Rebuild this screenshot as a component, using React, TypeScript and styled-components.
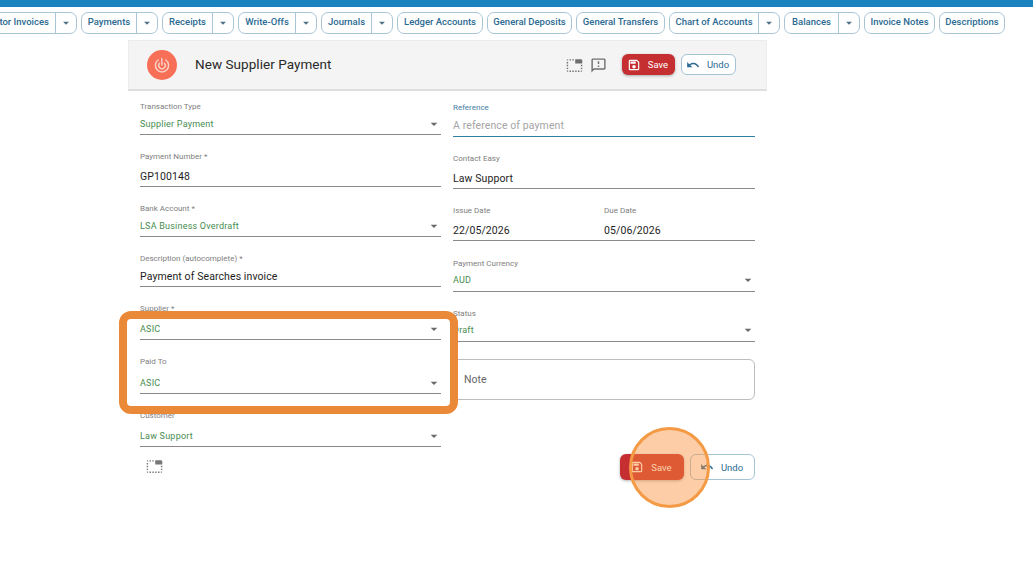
import React from "react";
import styled, { createGlobalStyle } from "styled-components";
import { MdArrowDropDown, MdOutlineSave, MdUndo, MdTabUnselected, MdOutlineFeedback } from "react-icons/md";

const Global = createGlobalStyle`
  html, body { margin: 0; padding: 0; background: #fff; }
  body { font-family: Roboto, "Liberation Sans", sans-serif; overflow: hidden; }
`;

const Page = styled.div`
  position: relative;
  width: 1033px;
  height: 576px;
  overflow: hidden;
`;
const TopBar = styled.div`
  height: 7px;
  background: #1a82bf;
`;
const Nav = styled.nav`
  display: flex;
  gap: 4px;
  margin: 5px 0 0 -30px;
  height: 22px;
`;
const NavGroup = styled.div<{ $w: number }>`
  display: flex;
  flex: none;
  width: ${(p) => p.$w}px;
  height: 22px;
  box-sizing: border-box;
  border: 1px solid #a9c6d6;
  border-radius: 7px;
  color: #2b6a92;
  font: 500 9.5px/18px Roboto, sans-serif;
`;
const NavLabel = styled.span`
  flex: 1;
  text-align: center;
  white-space: nowrap;
`;
const NavCaret = styled.span`
  flex: none;
  width: 20px;
  border-left: 1px solid #a9c6d6;
  display: flex;
  align-items: center;
  justify-content: center;
  color: #4e7187;
  font-size: 14px;
`;
const Panel = styled.main`
  width: 639px;
  margin: 6px 0 0 128px;
`;
const Header = styled.header`
  height: 51px;
  box-sizing: border-box;
  background: #f4f4f4;
  border: 1px solid #ececec;
  border-bottom: 2px solid #dedede;
  display: flex;
  align-items: center;
  padding: 0 30px 0 18px;
`;
const Logo = styled.svg`
  width: 30px;
  height: 30px;
  flex: none;
`;
const Title = styled.h1`
  margin: 0 0 2px 18px;
  flex: 1;
  font: 400 13.5px Roboto, sans-serif;
  letter-spacing: 0.05px;
  color: #2a2a2a;
`;
const HeaderIcon = styled.span`
  display: flex;
  color: #6f6f6f;
  font-size: 17px;
  margin-right: 7px;
`;
const SolidButton = styled.button<{ $w: number; $h: number }>`
  width: ${(p) => p.$w}px;
  height: ${(p) => p.$h}px;
  border: 0;
  border-radius: 6px;
  background: #c62f31;
  box-shadow: 0 1px 3px rgba(0, 0, 0, 0.3);
  color: #fff;
  font: 400 9.5px Roboto, sans-serif;
  display: flex;
  align-items: center;
  justify-content: center;
  gap: 7px;
  padding: 0 2px 0 0;
  svg { font-size: 14px; }
`;
const OutlineButton = styled.button<{ $w: number; $h: number }>`
  width: ${(p) => p.$w}px;
  height: ${(p) => p.$h}px;
  box-sizing: border-box;
  border: 1px solid #a4c4d6;
  border-radius: 6px;
  background: #fff;
  color: #2b6a92;
  font: 400 9.5px Roboto, sans-serif;
  display: flex;
  align-items: center;
  justify-content: center;
  gap: 7px;
  padding: 0 2px 0 0;
  svg { font-size: 14px; }
`;
const HeaderActions = styled.div`
  display: flex;
  align-items: center;
  gap: 6px;
  margin: 0 0 1px 8px;
`;
const Form = styled.div`
  display: grid;
  grid-template-columns: 301px 302px;
  column-gap: 12px;
  padding: 0 12px;
`;
const Column = styled.div`
  display: flex;
  flex-direction: column;
`;
const FieldBox = styled.div<{ $h: number }>`
  height: ${(p) => p.$h}px;
  display: flex;
  flex-direction: column;
  justify-content: flex-end;
  min-width: 0;
`;
const Label = styled.label<{ $gap: number; $active?: boolean }>`
  font: 400 8px/10px Roboto, sans-serif;
  color: ${(p) => (p.$active ? "#3f7ea6" : "#808080")};
  margin-bottom: ${(p) => p.$gap}px;
`;
const Control = styled.div<{ $active?: boolean; $low?: boolean }>`
  display: flex;
  align-items: center;
  justify-content: space-between;
  box-sizing: border-box;
  height: 20px;
  padding-bottom: ${(p) => (p.$low ? 1 : 3)}px;
  border-bottom: 1px solid ${(p) => (p.$active ? "#2f7f9e" : "#8a8a8a")};
`;
const SelectValue = styled.span`
  font: 400 9px Roboto, sans-serif;
  letter-spacing: 0.22px;
  color: #478c4f;
`;
const InputValue = styled.span<{ $placeholder?: boolean }>`
  font: 400 10.5px Roboto, sans-serif;
  letter-spacing: 0.1px;
  color: ${(p) => (p.$placeholder ? "#a5a5a5" : "#1e1e1e")};
`;
const Caret = styled.span`
  display: flex;
  color: #6a6a6a;
  font-size: 16px;
  margin-right: -1px;
`;
const DateRow = styled.div`
  display: grid;
  grid-template-columns: 1fr 1fr;
  height: 52px;
  column-gap: 0;
`;
const Note = styled.div`
  margin-top: 17px;
  height: 41px;
  box-sizing: border-box;
  border: 1px solid #bdbdbd;
  border-radius: 6px;
  padding-left: 10px;
  display: flex;
  align-items: center;
  font: 400 10.5px Roboto, sans-serif;
  color: #666;
`;
const Footer = styled.div`
  display: flex;
  align-items: center;
  padding: 7px 12px 0 18px;
`;
const FooterIcon = styled.span`
  display: flex;
  flex: 1;
  color: #777;
  font-size: 17px;
  margin-top: -1px;
`;
const FooterActions = styled.div`
  display: flex;
  gap: 6px;
`;
const Highlight = styled.div`
  position: absolute;
  left: 119px;
  top: 311px;
  width: 339px;
  height: 103px;
  box-sizing: border-box;
  border: 8px solid #ea8a38;
  border-radius: 12px;
  pointer-events: none;
`;
const Spotlight = styled.div`
  position: absolute;
  left: 629px;
  top: 427px;
  width: 81px;
  height: 81px;
  box-sizing: border-box;
  border: 3px solid #f49a45;
  border-radius: 50%;
  background: rgba(250, 145, 60, 0.45);
  pointer-events: none;
`;

type FieldProps = { h: number; gap: number; label: string; value: string; select?: boolean; active?: boolean; placeholder?: boolean; low?: boolean };
const Field = ({ h, gap, label, value, select, active, placeholder, low }: FieldProps) => (
  <FieldBox $h={h}>
    <Label $gap={gap} $active={active}>{label}</Label>
    <Control $active={active} $low={low}>
      {select ? <SelectValue>{value}</SelectValue> : <InputValue $placeholder={placeholder}>{value}</InputValue>}
      {select && <Caret><MdArrowDropDown /></Caret>}
    </Control>
  </FieldBox>
);

const navItems: [string, number, boolean][] = [
  ["Creditor Invoices", 107, true],
  ["Payments", 77, true],
  ["Receipts", 72, true],
  ["Write-Offs", 79, true],
  ["Journals", 72, true],
  ["Ledger Accounts", 86, false],
  ["General Deposits", 85, false],
  ["General Transfers", 89, false],
  ["Chart of Accounts", 111, true],
  ["Balances", 76, true],
  ["Invoice Notes", 71, false],
  ["Descriptions", 66, false],
];

export default function App() {
  return (
    <Page>
      <Global />
      <TopBar />
      <Nav>
        {navItems.map(([t, w, caret]) => (
          <NavGroup key={t} $w={w}>
            <NavLabel>{t}</NavLabel>
            {caret && <NavCaret><MdArrowDropDown /></NavCaret>}
          </NavGroup>
        ))}
      </Nav>
      <Panel>
        <Header>
          <Logo viewBox="0 0 30 30">
            <circle cx="15" cy="15" r="15" fill="#f76f57" />
            <path d="M11.2 10a6.6 6.6 0 1 0 7.6 0" fill="none" stroke="#fbd2c8" strokeWidth="1.4" strokeLinecap="round" />
            <path d="M12.6 13.2a3.3 3.3 0 1 0 4.8 0" fill="none" stroke="#fbd2c8" strokeWidth="1.4" strokeLinecap="round" />
            <path d="M14.8 8.5l.2 6.5" fill="none" stroke="#fbd2c8" strokeWidth="1.4" strokeLinecap="round" />
          </Logo>
          <Title>New Supplier Payment</Title>
          <HeaderIcon><MdTabUnselected /></HeaderIcon>
          <HeaderIcon><MdOutlineFeedback /></HeaderIcon>
          <HeaderActions>
            <SolidButton $w={53} $h={21}><MdOutlineSave />Save</SolidButton>
            <OutlineButton $w={55} $h={21}><MdUndo />Undo</OutlineButton>
          </HeaderActions>
        </Header>
        <Form>
          <Column>
            <Field h={44} gap={3} low label="Transaction Type" value="Supplier Payment" select />
            <Field h={52} gap={5} low label="Payment Number *" value="GP100148" />
            <Field h={50} gap={3} low label="Bank Account *" value="LSA Business Overdraft" select />
            <Field h={50} gap={3} low label="Description (autocomplete) *" value="Payment of Searches invoice" />
            <Field h={53} gap={6} low label="Supplier *" value="ASIC" select />
            <Field h={54} gap={7} low label="Paid To" value="ASIC" select />
            <Field h={53} gap={6} low label="Customer" value="Law Support" select />
          </Column>
          <Column>
            <Field h={46} gap={4} label="Reference" value="A reference of payment" placeholder active />
            <Field h={52} gap={5} low label="Contact Easy" value="Law Support" />
            <DateRow>
              <Field h={52} gap={5} low label="Issue Date" value="22/05/2026" />
              <Field h={52} gap={5} low label="Due Date" value="05/06/2026" />
            </DateRow>
            <Field h={51} gap={3} label="Payment Currency" value="AUD" select />
            <Field h={50} gap={3} label="Status" value="Draft" select />
            <Note>Note</Note>
          </Column>
        </Form>
        <Footer>
          <FooterIcon><MdTabUnselected /></FooterIcon>
          <FooterActions>
            <SolidButton $w={64} $h={26}><MdOutlineSave />Save</SolidButton>
            <OutlineButton $w={65} $h={26}><MdUndo />Undo</OutlineButton>
          </FooterActions>
        </Footer>
      </Panel>
      <Highlight />
      <Spotlight />
    </Page>
  );
}
